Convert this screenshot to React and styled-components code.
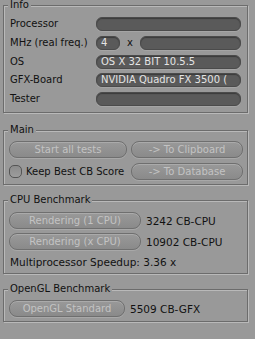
import React from 'react';
import styled, { createGlobalStyle } from 'styled-components';

const Global = createGlobalStyle`
    html, body {
        margin: 0;
        padding: 0;
        background: #999999;
    }
    body {
        font-family: "DejaVu Sans", Verdana, sans-serif;
        font-size: 10px;
        color: #111;
    }
`

const Page = styled.div`
    width: 255px;
    height: 339px;
    padding: 0 7px 0 3px;
    box-sizing: border-box;
    display: flex;
    flex-direction: column;
`

const Group = styled.fieldset`
    margin: ${p => p.top || 0}px 0 0 0;
    padding: ${p => p.pt}px 4px ${p => p.pb}px 5px;
    border: 1px solid #6c6c6c;
    box-shadow: 1px 1px 0 #b9b9b9, inset 1px 1px 0 #b9b9b9;
    min-width: 0;
`

const Legend = styled.legend`
    font-size: 10px;
    line-height: 10px;
    height: 10px;
    padding: 0 2px;
    margin-left: -1px;
    background: #999999;
    color: #111;
`

const InfoGrid = styled.div`
    display: grid;
    grid-template-columns: 87px 145px;
    grid-auto-rows: 14px;
    row-gap: 4.75px;
    align-items: center;
`

const Label = styled.span`
    padding-left: 1px;
    white-space: nowrap;
    line-height: 14px;
`

const Field = styled.div`
    height: 14px;
    box-sizing: border-box;
    width: ${p => p.w ? p.w + 'px' : 'auto'};
    flex: ${p => p.w ? 'none' : 1};
    background: #5a5a5a;
    border: 1px solid #4b4b4b;
    border-radius: 6px;
    box-shadow: inset 0 1px 1px rgba(0,0,0,0.35), 0 1px 0 rgba(255,255,255,0.12);
    color: #e4e4e4;
    line-height: 12px;
    padding-left: 4px;
    white-space: nowrap;
    overflow: hidden;
`

const FreqRow = styled.div`
    display: flex;
    align-items: center;
`

const Times = styled.span`
    width: 20px;
    text-align: center;
    line-height: 14px;
`

const MainGrid = styled.div`
    display: grid;
    grid-template-columns: 118px 112px;
    column-gap: 4px;
    grid-auto-rows: 17px;
    row-gap: 5px;
    align-items: center;
`

const Button = styled.div`
    height: ${p => p.h || 17}px;
    width: ${p => p.w ? p.w + 'px' : 'auto'};
    flex: none;
    box-sizing: border-box;
    border: 1px solid #6f6f6f;
    border-radius: 8px;
    background: linear-gradient(#999999, #8a8a8a);
    box-shadow: inset 0 1px 0 rgba(255,255,255,0.18), 0 1px 0 rgba(255,255,255,0.15);
    color: #c3c3c3;
    font-size: 10px;
    display: flex;
    align-items: center;
    justify-content: center;
    white-space: nowrap;
`

const CheckRow = styled.div`
    display: flex;
    align-items: center;
    gap: 4px;
    white-space: nowrap;
`

const Check = styled.span`
    width: 13px;
    height: 13px;
    box-sizing: border-box;
    border: 1px solid #555;
    border-radius: 5px;
    background: linear-gradient(#8c8c8c, #9c9c9c);
    flex: none;
`

const Stack = styled.div`
    display: flex;
    flex-direction: column;
    gap: ${p => p.gap}px;
`

const ResultRow = styled.div`
    display: flex;
    align-items: center;
    gap: 5px;
    height: ${p => p.h || 17}px;
    white-space: nowrap;
    font-size: 10.5px;
`

export default function App() {
    return (
        <>
            <Global />
            <Page>
                <Group pt={7} pb={6}>
                    <Legend>Info</Legend>
                    <InfoGrid>
                        <Label>Processor</Label>
                        <Field />
                        <Label>MHz (real freq.)</Label>
                        <FreqRow>
                            <Field w={24}>4</Field>
                            <Times>x</Times>
                            <Field />
                        </FreqRow>
                        <Label>OS</Label>
                        <Field>OS X 32 BIT 10.5.5</Field>
                        <Label>GFX-Board</Label>
                        <Field>NVIDIA Quadro FX 3500 (</Field>
                        <Label>Tester</Label>
                        <Field />
                    </InfoGrid>
                </Group>

                <Group top={12} pt={6} pb={4}>
                    <Legend>Main</Legend>
                    <MainGrid>
                        <Button>Start all tests</Button>
                        <Button>-&gt; To Clipboard</Button>
                        <CheckRow>
                            <Check />
                            <span>Keep Best CB Score</span>
                        </CheckRow>
                        <Button>-&gt; To Database</Button>
                    </MainGrid>
                </Group>

                <Group top={10} pt={7} pb={3}>
                    <Legend>CPU Benchmark</Legend>
                    <Stack gap={4}>
                        <ResultRow>
                            <Button w={132}>Rendering (1 CPU)</Button>
                            <span>3242 CB-CPU</span>
                        </ResultRow>
                        <ResultRow>
                            <Button w={132}>Rendering (x CPU)</Button>
                            <span>10902 CB-CPU</span>
                        </ResultRow>
                        <ResultRow h={16}>
                            <Label>Multiprocessor Speedup: 3.36 x</Label>
                        </ResultRow>
                    </Stack>
                </Group>

                <Group top={10} pt={6} pb={4}>
                    <Legend>OpenGL Benchmark</Legend>
                    <ResultRow>
                        <Button w={116}>OpenGL Standard</Button>
                        <span>5509 CB-GFX</span>
                    </ResultRow>
                </Group>
            </Page>
        </>
    );
}
